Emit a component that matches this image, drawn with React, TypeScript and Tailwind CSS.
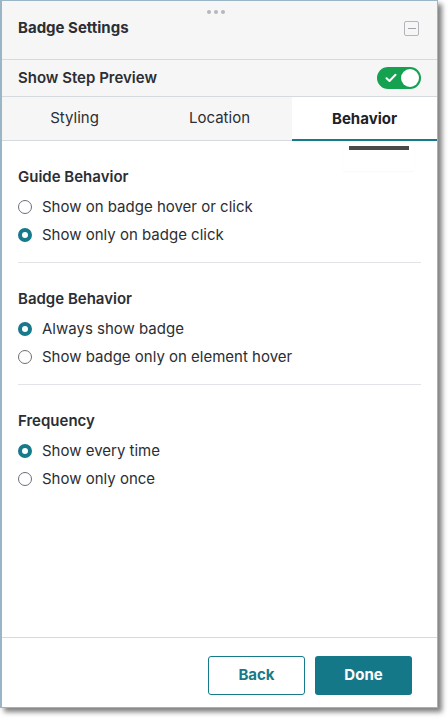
import React from "react";

const Radio = ({ checked, label }: { checked?: boolean; label: string }) => (
  <label className="flex items-center h-[28px] gap-[10px]">
    {checked ? (
      <span className="w-[14px] h-[14px] rounded-full border-[4px] border-[#177a8a] bg-white" />
    ) : (
      <span className="w-[14px] h-[14px] rounded-full border border-[#6b6f76] bg-white" />
    )}
    <span className="text-[15px] text-[#2b2e33]">{label}</span>
  </label>
);

const Section = ({
  title,
  options,
  last,
}: {
  title: string;
  options: { label: string; checked?: boolean }[];
  last?: boolean;
}) => (
  <div className={last ? "pt-[26px]" : "pt-[26px] pb-[13px] border-b border-[#e2e3e6]"}>
    <div className="text-[15px] font-semibold text-[#2b2e33] leading-[20px] mb-[6px]">{title}</div>
    {options.map((o) => (
      <Radio key={o.label} label={o.label} checked={o.checked} />
    ))}
  </div>
);

const App = () => {
  return (
    <div className="w-[448px] h-[718px] bg-white" style={{ fontFamily: "Inter, 'Noto Sans', sans-serif" }}>
      <div className="relative w-[438px] h-[708px] flex flex-col bg-white border border-[#9ab6c6] border-l-2 shadow-[4px_4px_5px_rgba(0,0,0,0.5)]">
        {/* header */}
        <div className="relative h-[59px] bg-[#f6f6f7] border-b border-[#d6d9de] flex items-center justify-between pl-[16px] pr-[18px] pb-[4px]">
          <div className="absolute top-[9px] left-1/2 -translate-x-[13px] flex gap-[3px]">
            <span className="w-[4px] h-[4px] rounded-full bg-[#b4b7bd]" />
            <span className="w-[4px] h-[4px] rounded-full bg-[#b4b7bd]" />
            <span className="w-[4px] h-[4px] rounded-full bg-[#b4b7bd]" />
          </div>
          <span className="text-[15px] font-bold text-[#2b2e33]">Badge Settings</span>
          <span className="w-[15px] h-[15px] border border-[#b3b5ba] rounded-[2px] flex items-center justify-center">
            <span className="w-[8px] h-[1px] bg-[#a0a3a8]" />
          </span>
        </div>

        {/* preview row */}
        <div className="h-[37px] bg-[#f6f6f7] border-b border-[#d6d9de] flex items-center justify-between pl-[16px] pr-[16px]">
          <span className="text-[15px] font-semibold text-[#2b2e33]">Show Step Preview</span>
          <span className="w-[44px] h-[22px] rounded-full bg-[#14a150] flex items-center justify-between pl-[8px] pr-[2px]">
            <svg width="12" height="10" viewBox="0 0 12 10" fill="none">
              <path d="M1.5 5.2 L4.5 8 L10.5 1.8" stroke="white" strokeWidth="2" strokeLinecap="round" strokeLinejoin="round" />
            </svg>
            <span className="w-[18px] h-[18px] rounded-full bg-white" />
          </span>
        </div>

        {/* tabs */}
        <div className="grid grid-cols-3 h-[44px] bg-[#f6f6f7] border-b border-[#d6d9de]">
          <div className="flex items-center justify-center text-[15px] text-[#2b2e33]">Styling</div>
          <div className="flex items-center justify-center text-[15px] text-[#2b2e33]">Location</div>
          <div className="flex items-center justify-center text-[15px] font-bold text-[#1f2126] bg-white border-b-2 border-[#177a8a] -mb-px pt-[2px]">
            Behavior
          </div>
        </div>

        <div className="absolute top-[142px] left-[342px] w-[70px] h-[28px] bg-white shadow-[0_1px_2px_rgba(0,0,0,0.03)] flex justify-center pt-[3px]">
          <span className="w-[60px] h-[4px] bg-[#4a4a4a]" />
        </div>

        {/* content */}
        <div className="flex-1 pl-[16px] pr-[16px]">
          <Section
            title="Guide Behavior"
            options={[
              { label: "Show on badge hover or click" },
              { label: "Show only on badge click", checked: true },
            ]}
          />
          <Section
            title="Badge Behavior"
            options={[
              { label: "Always show badge", checked: true },
              { label: "Show badge only on element hover" },
            ]}
          />
          <Section
            title="Frequency"
            last
            options={[{ label: "Show every time", checked: true }, { label: "Show only once" }]}
          />
        </div>

        {/* footer */}
        <div className="h-[70px] border-t border-[#d8d9de] flex items-start justify-end gap-[10px] pt-[18px] pr-[25px]">
          <button className="w-[97px] h-[39px] rounded-[3px] border border-[#177a8a] bg-white text-[15px] font-bold text-[#177a8a]">
            Back
          </button>
          <button className="w-[97px] h-[39px] rounded-[3px] bg-[#157889] text-[15px] font-bold text-white">
            Done
          </button>
        </div>
      </div>
    </div>
  );
};

export default App;
